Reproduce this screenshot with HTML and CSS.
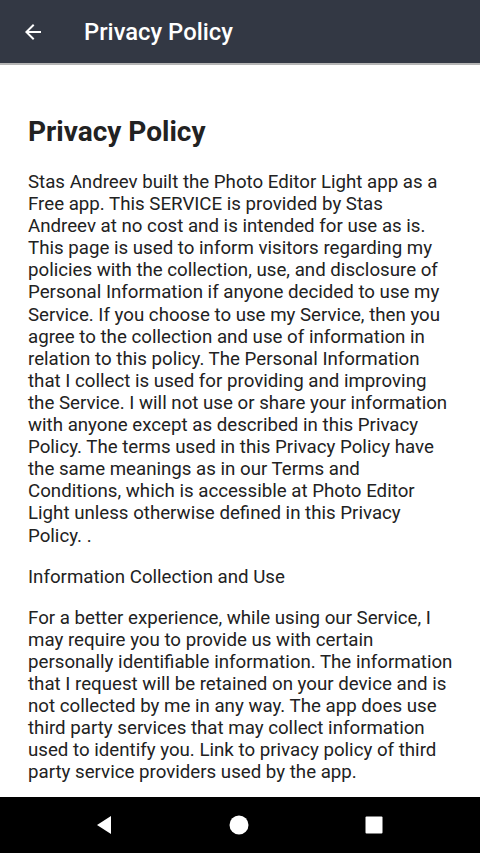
FILE: index.html
```html
<!DOCTYPE html>
<html>
<head>
<meta charset="utf-8">
<link rel="stylesheet" href="styles.css">
</head>
<body>
<div class="screen">
  <header class="appbar">
    <svg class="back" width="24" height="24" viewBox="0 0 24 24"><path d="M20 11H7.83l5.59-5.59L12 4l-8 8 8 8 1.41-1.41L7.83 13H20v-2z" fill="#fff"/></svg>
    <div class="title">Privacy Policy</div>
  </header>
  <main class="content">
    <h1>Privacy Policy</h1>
    <p>Stas Andreev built the Photo Editor Light app as a Free app. This SERVICE is provided by Stas Andreev at no cost and is intended for use as is. This page is used to inform visitors regarding my policies with the collection, use, and disclosure of Personal Information if anyone decided to use my Service. If you choose to use my Service, then you agree to the collection and use of information in relation to this policy. The Personal Information that I collect is used for providing and improving the Service. I will not use or share your information with anyone except as described in this Privacy Policy. The terms used in this Privacy Policy have the same meanings as in our Terms and Conditions, which is accessible at Photo Editor Light unless otherwise defined in this Privacy Policy. .</p>
    <p>Information Collection and Use</p>
    <p>For a better experience, while using our Service, I may require you to provide us with certain personally identifiable information. The information that I request will be retained on your device and is not collected by me in any way. The app does use third party services that may collect information used to identify you. Link to privacy policy of third party service providers used by the app.</p>
  </main>
  <nav class="navbar">
    <svg width="20" height="22" viewBox="0 0 20 22"><path d="M17 2 L17 20 L3 11 Z" fill="#fff"/></svg>
    <svg width="22" height="22" viewBox="0 0 22 22"><circle cx="11" cy="11" r="9.5" fill="#fff"/></svg>
    <svg width="22" height="22" viewBox="0 0 22 22"><rect x="2.5" y="2.5" width="17" height="17" rx="1" fill="#fff"/></svg>
  </nav>
</div>
</body>
</html>
```
FILE: styles.css
```css
html, body {
  margin: 0;
  padding: 0;
}
body {
  font-family: Roboto, "Noto Sans", sans-serif;
  background: #fff;
}
.screen {
  width: 480px;
  height: 853px;
  display: flex;
  flex-direction: column;
  overflow: hidden;
}
.appbar {
  height: 65px;
  flex: none;
  background: #333844;
  border-bottom: 2px solid #b5b5b5;
  box-sizing: border-box;
  display: flex;
  align-items: center;
  padding-left: 21px;
  padding-top: 1px;
}
.back {
  width: 24px;
  height: 24px;
}
.title {
  margin-left: 39px;
  color: #fff;
  font-size: 23.8px;
  font-weight: 500;
}
.content {
  flex: 1;
  overflow: hidden;
  padding: 0 26px 0 28px;
  color: #222;
}
h1 {
  margin: 50px 0 0;
  font-size: 28px;
  font-weight: 700;
  line-height: 34px;
}
p {
  margin: 22px 0 0;
  font-size: 18.7px;
  line-height: 22.1px;
}
p + p {
  margin-top: 19px;
}
.navbar {
  height: 56px;
  flex: none;
  background: #000;
  display: flex;
  justify-content: space-between;
  align-items: center;
  padding: 0 95px 0 94px;
}
```
